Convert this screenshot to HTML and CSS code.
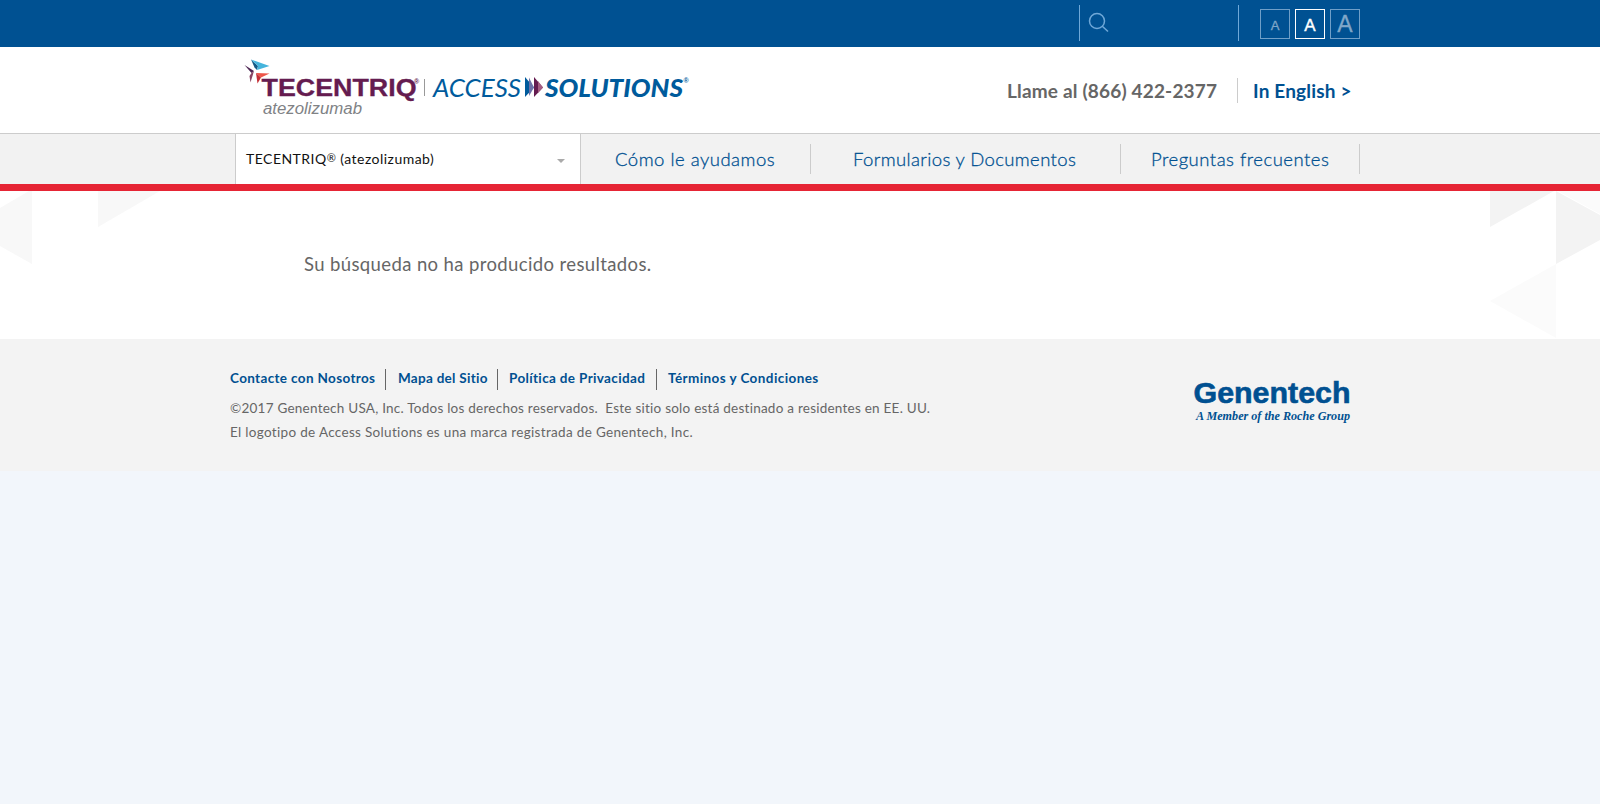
FILE: index.html
```html
<!DOCTYPE html>
<html lang="es">
<head>
<meta charset="utf-8">
<title>TECENTRIQ Access Solutions</title>
<link rel="stylesheet" href="styles.css">
</head>
<body>
<div class="topbar">
  <div class="search">
    <svg width="22" height="22" viewBox="0 0 22 22" fill="none" stroke="#6fa8d8" stroke-width="1.5"><circle cx="9" cy="9" r="7.5"/><path d="M14.3 14.3L20 19.5"/></svg>
  </div>
  <div class="sizes">
    <a class="size small">A</a><a class="size medium">A</a><a class="size large">A</a>
  </div>
</div>
<header class="header">
  <svg class="logo" width="450" height="62" viewBox="240 56 450 62">
    <path d="M251 59.500L258 66L257 70L254.500 67.500Z" fill="#155a86"/><path d="M251 59.500L269.500 66L257 70L258 66Z" fill="#45b4dc"/>
    <path d="M244.500 65L254 71L251.500 73Z" fill="#4c2452"/><path d="M254 71L250.500 82.500L249.500 76L251.500 73Z" fill="#8a4563"/>
    <path d="M256 73L269.500 73.500L261 77.500Z" fill="#ee5548"/><path d="M256 73L261 77.500L257.500 83.500Z" fill="#c52f36"/>
    <text class="brand" x="261.500" y="96" textLength="155" lengthAdjust="spacingAndGlyphs">TECENTRIQ</text>
    <text class="reg brand-reg" x="414" y="84">®</text>
    <path d="M424.500 79V96" stroke="#999"/>
    <text class="generic" x="263" y="114" textLength="99" lengthAdjust="spacingAndGlyphs">atezolizumab</text>
    <text class="access" x="433" y="96.500" textLength="88" lengthAdjust="spacingAndGlyphs">ACCESS</text>
    <path d="M525 77L534 87.500L525 97Z" fill="#005b9c"/><path d="M529 77.500L534 87.500L529 96Z" fill="#6c70a8"/>
    <path d="M534 77L543 87.500L534 97Z" fill="#651c50"/><path d="M538 81L543 87.500L538 93Z" fill="#a35c82"/>
    <text class="solutions" x="545" y="96.500" textLength="138" lengthAdjust="spacingAndGlyphs">SOLUTIONS</text>
    <text class="reg" x="683.500" y="83">®</text>
  </svg>
  <div class="contact"><span class="phone">Llame al (866) 422-2377</span><a class="english">In English &gt;</a></div>
</header>
<nav class="nav">
  <div class="picker"><span>TECENTRIQ<span class="r">®</span> (atezolizumab)</span><i class="caret"></i></div>
  <a class="tab help">Cómo le ayudamos</a>
  <a class="tab forms">Formularios y Documentos</a>
  <a class="tab faq">Preguntas frecuentes</a>
</nav>
<main class="main">
  <svg class="deco" width="160" height="148" viewBox="0 0 160 148"><path d="M0 17L29 0H32V73L0 55ZM98 0H160L98 36Z" fill="#f8f8f8"/></svg>
  <p class="message">Su búsqueda no ha producido resultados.</p>
  <svg class="deco" width="110" height="148" viewBox="0 0 110 148"><path d="M0 0H64L0 36ZM66 0L110 24V49L66 73Z" fill="#f3f3f3"/><path d="M68 0H110V23ZM66 73V147L0 110Z" fill="#fbfbfb"/></svg>
</main>
<footer class="footer">
  <div class="legal">
    <div class="links"><a class="l1">Contacte con Nosotros</a><a class="l2">Mapa del Sitio</a><a class="l3">Política de Privacidad</a><a class="l4">Términos y Condiciones</a></div>
    <p class="copy">©2017 Genentech USA, Inc. Todos los derechos reservados.&nbsp; Este sitio solo está destinado a residentes en EE. UU.</p>
    <p class="mark">El logotipo de Access Solutions es una marca registrada de Genentech, Inc.</p>
  </div>
  <svg class="genentech" width="170" height="54" viewBox="1187 374 170 54">
    <text class="gene" x="1193.500" y="403" textLength="157" lengthAdjust="spacingAndGlyphs">Genentech</text>
    <text class="member" x="1196" y="419.500" textLength="154" lengthAdjust="spacingAndGlyphs">A Member of the Roche Group</text>
  </svg>
</footer>
</body>
</html>
```
FILE: styles.css
```css
* { box-sizing: border-box; }
body { margin: 0; background: #f2f6fb; font-family: Lato, "Open Sans", sans-serif; color: #666; font-variant-ligatures: none; }
p { margin: 0; }
.topbar { height: 47px; background: #005192; display: flex; justify-content: flex-end; padding: 5px 240px 0 0; }
.search { width: 160px; height: 36px; border: solid #6fa8d8; border-width: 0 1px; padding: 7px 0 0 8px; }
.sizes { display: flex; gap: 5px; margin: 4px 0 0 21px; }
.size { width: 30px; height: 30px; border: 1px solid #6f9fc8; color: #7fa6c8; text-align: center; line-height: 32px; font-family: "Liberation Sans", sans-serif; }
.small { font-size: 13px; -webkit-text-stroke: .3px; }
.medium { font-size: 17px; line-height: 31px; color: #fff; border-color: #fff; -webkit-text-stroke: .4px; }
.large { font-size: 23px; line-height: 29px; -webkit-text-stroke: .3px; }
.header { height: 86px; background: #fff; display: flex; justify-content: space-between; padding: 9px 240px 0; }
.brand { font: bold 24px "Liberation Sans", sans-serif; fill: #651c50; stroke: #651c50; stroke-width: .3px; }
.generic { font: italic 16px "Liberation Sans", sans-serif; fill: #808285; }
.access { font: italic 400 25px Lato, sans-serif; fill: #005b9c; }
.solutions { font: italic 900 25px Lato, sans-serif; fill: #005b9c; }
.reg { font: bold 7px "Liberation Sans", sans-serif; fill: #005b9c; }
.brand-reg { fill: #651c50; }
.contact { display: flex; margin-top: 22px; height: 25px; font-size: 19px; line-height: 25px; font-weight: 700; white-space: nowrap; letter-spacing: .17px; }
.phone { width: 231px; border-right: 1px solid #ccc; }
.english { width: 107px; margin-left: 15px; color: #005091; }
.nav { height: 58px; background: #f2f2f2; border-top: 1px solid #ccc; border-bottom: 7px solid #e62535; display: flex; padding-left: 235px; white-space: nowrap; }
.picker { width: 346px; height: 50px; background: #fff; border: solid #ccc; border-width: 0 1px; padding: 0 15px 2px 10px; display: flex; align-items: center; justify-content: space-between; font-size: 14px; letter-spacing: .47px; color: #111; }
.r { font-size: 11px; vertical-align: 2px; line-height: 1; }
.caret { border: 4px solid transparent; border-top-color: #aaa; border-bottom: 0; margin-top: 6px; }
.tab { height: 30px; margin-top: 10px; border-right: 1px solid #ccc; color: #005091; font-size: 18.500px; line-height: 31px; font-weight: 300; letter-spacing: .43px; -webkit-text-stroke: .3px; }
.help { width: 230px; padding-left: 34px; letter-spacing: .5px; }
.forms { width: 310px; padding-left: 42px; letter-spacing: .38px; }
.faq { width: 239px; padding-left: 30px; letter-spacing: .5px; }
.main { height: 148px; background: #fff; display: flex; }
.deco { flex: none; }
.message { flex: 1; padding: 60px 0 0 144px; font-size: 18.500px; line-height: 26px; letter-spacing: .38px; }
.footer { height: 132px; background: #f3f3f3; display: flex; justify-content: space-between; padding: 30px 243px 0 230px; white-space: nowrap; }
.links { display: flex; height: 21px; color: #005091; font-size: 13.500px; line-height: 19px; font-weight: 700; letter-spacing: .35px; }
.links a { padding-right: 10px; margin-right: 12px; border-right: 1px solid #666; }
.links .l1 { width: 156px; } .links .l2 { width: 100px; letter-spacing: .28px; } .links .l3 { width: 148px; margin-right: 11px; } .links a.l4 { border: 0; margin: 0; letter-spacing: .42px; }
.links .l3 { margin-left: -1px; }
.copy, .mark { font-size: 13.500px; line-height: 24px; letter-spacing: .24px; }
.mark { letter-spacing: .32px; }
.copy { margin-top: 6px; }
.genentech { margin-top: 5px; }
.gene { font: bold 29px "Liberation Sans", sans-serif; fill: #005091; stroke: #005091; stroke-width: .6px; }
.member { font: italic bold 12.500px "Liberation Serif", serif; fill: #005091; }
```
